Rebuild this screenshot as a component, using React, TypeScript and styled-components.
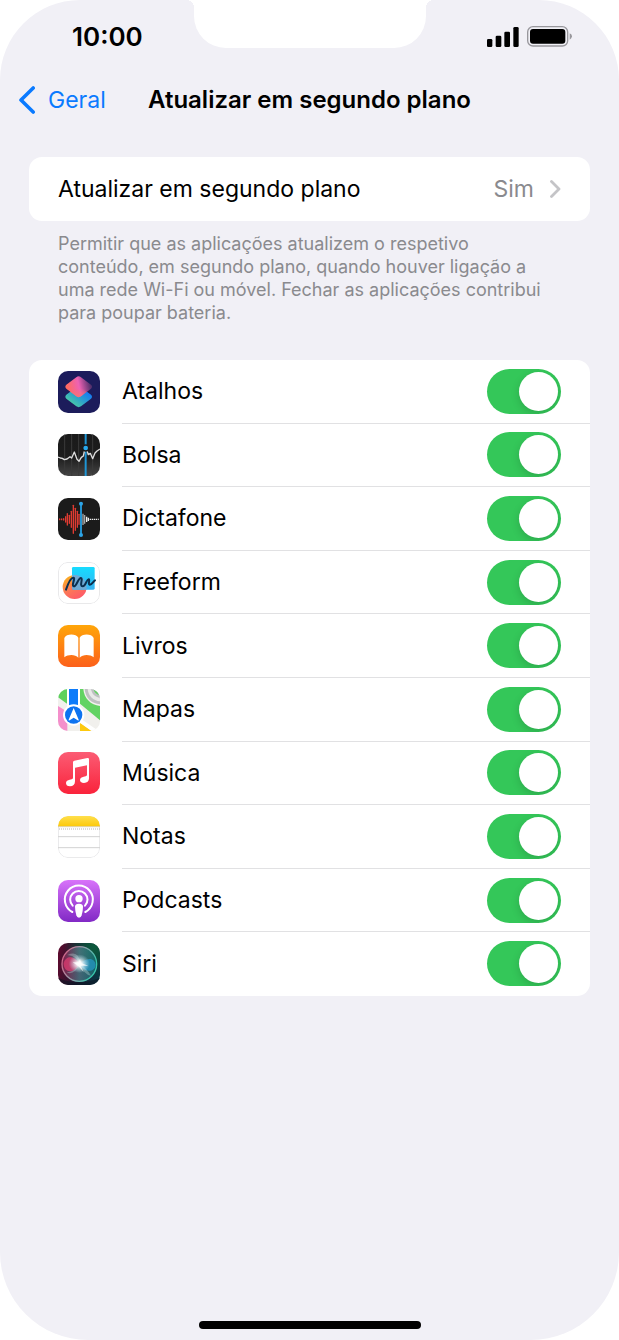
import React, { useState } from 'react';
import styled, { createGlobalStyle } from 'styled-components';

const GlobalStyle = createGlobalStyle`
  *, *::before, *::after { box-sizing: border-box; }
  body {
    margin: 0;
    background: #ffffff;
    color: #000000;
    font-family: Inter, "Liberation Sans", sans-serif;
    font-size: 23px;
  }
`;

const Screen = styled.div`
  display: flex;
  flex-direction: column;
  min-height: 100vh;
  background: #f1f0f6;
  border-radius: 80px 80px 88px 88px;
  overflow: hidden;
`;

const StatusBar = styled.header`
  display: grid;
  grid-template-columns: 1fr 232px 1fr;
  height: 72px;
`;

const Time = styled.time`
  padding-left: 72px;
  font-size: 26px;
  font-weight: 600;
  line-height: 74px;
`;

const Notch = styled.div`
  position: relative;
  height: 48px;
  background: #ffffff;
  border-radius: 0 0 32px 32px;

  &::before,
  &::after {
    content: '';
    position: absolute;
    top: 0;
    width: 8px;
    height: 8px;
  }
  &::before {
    right: 100%;
    background: radial-gradient(circle at 0 100%, transparent 8px, #ffffff 8px);
  }
  &::after {
    left: 100%;
    background: radial-gradient(circle at 100% 100%, transparent 8px, #ffffff 8px);
  }
`;

const Indicators = styled.div`
  display: flex;
  justify-content: flex-end;
  align-items: center;
  gap: 8px;
  height: 73px;
  padding-right: 47px;
`;

const NavBar = styled.nav`
  display: grid;
  grid-template-columns: 1fr auto 1fr;
  align-items: center;
  height: 55px;
`;

const BackLink = styled.a`
  display: flex;
  align-items: center;
  gap: 12px;
  padding-left: 18px;
  color: #0a7aff;
  text-decoration: none;
`;

const Title = styled.h1`
  margin: 0;
  font-size: 24px;
  font-weight: 600;
`;

const Content = styled.main`
  flex: 1;
  padding: 30px 29px;
`;

const Card = styled.div`
  background: #ffffff;
  border-radius: 13px;
  overflow: hidden;
`;

const SettingLink = styled.a`
  display: flex;
  align-items: center;
  gap: 16px;
  height: 64px;
  padding: 0 29px;
  color: inherit;
  text-decoration: none;
`;

const SettingName = styled.span`
  flex: 1;
`;

const SettingValue = styled.span`
  color: #8a8a8e;
`;

const Hint = styled.p`
  margin: 11px 0 36px;
  padding: 0 38px 0 29px;
  color: #8a8a8e;
  font-size: 18px;
  line-height: 23px;
`;

const AppList = styled(Card).attrs({ as: 'ul' })`
  display: grid;
  grid-auto-rows: 1fr;
  min-height: 636px;
  margin: 0;
  padding: 0;
  list-style: none;
`;

const AppRow = styled.li`
  display: flex;
  align-items: center;
  gap: 22px;
  padding-left: 29px;
`;

const RowBody = styled.div`
  display: flex;
  flex: 1;
  align-self: stretch;
  align-items: center;
  padding-right: 29px;
  border-bottom: 1px solid #e1e1e3;

  ${AppRow}:last-child & {
    border-bottom-color: transparent;
  }
`;

const AppName = styled.label`
  flex: 1;
`;

const Switch = styled.input`
  appearance: none;
  width: 74px;
  height: 45px;
  margin: 0;
  padding: 3px;
  border-radius: 23px;
  background: #e9e9ea;
  overflow: hidden;
  cursor: pointer;

  &::before {
    content: '';
    display: block;
    width: 39px;
    height: 39px;
    border-radius: 50%;
    background: #ffffff;
    box-shadow: 0 3px 8px rgba(0, 0, 0, 0.15);
  }
  &:checked {
    background: #34c759;
  }
  &:checked::before {
    margin-left: auto;
  }
`;

const HomeArea = styled.footer`
  display: flex;
  justify-content: center;
  padding-bottom: 11px;
`;

const HomeBar = styled.div`
  width: 222px;
  height: 8px;
  border-radius: 4px;
  background: #000000;
`;

const IconSvg = styled.svg`
  flex: none;
  display: block;
  width: 42px;
  height: 42px;
  border-radius: 10px;
`;

const AppIcon = ({ children }: { children: React.ReactNode }) => (
  <IconSvg viewBox="0 0 126 126" aria-hidden="true">{children}</IconSvg>
);

const ShortcutsIcon = () => (
  <AppIcon>
    <defs>
      <linearGradient id="sc-low" x1="0.2" y1="1" x2="0.9" y2="0.3">
        <stop offset="0" stopColor="#52d69a" />
        <stop offset="0.5" stopColor="#2fa5c8" />
        <stop offset="1" stopColor="#1478f5" />
      </linearGradient>
      <linearGradient id="sc-high" x1="0.1" y1="0.6" x2="0.95" y2="0.45">
        <stop offset="0" stopColor="#ff6a62" />
        <stop offset="0.5" stopColor="#ee62b4" />
        <stop offset="1" stopColor="#54306c" />
      </linearGradient>
      <linearGradient id="sc-tip" x1="0" y1="0" x2="0" y2="1">
        <stop offset="0.2" stopColor="#f76f7c" stopOpacity="0" />
        <stop offset="1" stopColor="#f77476" />
      </linearGradient>
    </defs>
    <rect width="126" height="126" fill="#1c1c5b" />
    <path d="M55 49Q62 43 69 49L99 71Q105 77 99 83L69 106Q62 111 55 106L25 83Q19 77 25 71Z" fill="url(#sc-low)" />
    <path d="M55 19Q62 13 69 19L99 41Q105 47 99 53L69 76Q62 81 55 76L25 53Q19 47 25 41Z" fill="url(#sc-high)" />
    <path d="M55 49Q62 43 69 49L86 62L69 76Q62 81 55 76L37 62Z" fill="url(#sc-tip)" />
  </AppIcon>
);

const StocksIcon = () => (
  <AppIcon>
    <defs>
      <linearGradient id="st-bg" x1="0" y1="0" x2="0" y2="1">
        <stop offset="0" stopColor="#1a1a1a" />
        <stop offset="0.55" stopColor="#1d1d1d" />
        <stop offset="1" stopColor="#454545" />
      </linearGradient>
    </defs>
    <rect width="126" height="126" fill="url(#st-bg)" />
    <path d="M20 0V126M41 0V126M62 0V126M104 0V126" stroke="#3b3b3b" strokeWidth="3" />
    <path d="M83 0V126" stroke="#1f95d4" strokeWidth="6" />
    <path d="M0 69L7 72L13 73L19 77L27 75L36 68L41 72L49 54L57 76L63 82L70 70L76 66L80 48L87 50L91 62L97 58L104 74L111 57L117 51L126 45" fill="none" stroke="#dddddd" strokeWidth="4" strokeLinejoin="round" />
    <circle cx="83" cy="42" r="11" fill="#1b1b1b" />
    <circle cx="83" cy="42" r="7" fill="#27a9ee" />
  </AppIcon>
);

const redBars = [[5, 2], [11, 2], [17, 4], [23, 16], [28, 34], [34, 24], [40, 48], [46, 84], [52, 66], [58, 48], [63, 30]];
const whiteBars = [[75, 34], [80, 26], [86, 16], [91, 10], [97, 4], [103, 4], [109, 4], [115, 4], [121, 3]];

const VoiceMemosIcon = () => (
  <AppIcon>
    <rect width="126" height="126" fill="#1b1b1b" />
    {redBars.map(([x, h]) => (
      <path key={x} d={`M${x} ${64 - h / 2}v${h}`} stroke="#e03b32" strokeWidth="4" strokeLinecap="round" />
    ))}
    {whiteBars.map(([x, h]) => (
      <path key={x} d={`M${x} ${64 - h / 2}v${h}`} stroke={x < 82 ? '#a5a5a5' : '#f0f0f0'} strokeWidth="4" />
    ))}
    <path d="M69 17V111" stroke="#2592cf" strokeWidth="6" />
    <circle cx="69" cy="17" r="6" fill="#2da5e8" />
    <circle cx="69" cy="111" r="6" fill="#2da5e8" />
  </AppIcon>
);

const FreeformIcon = () => (
  <AppIcon>
    <defs>
      <linearGradient id="ff-sq" x1="0" y1="0" x2="0" y2="1">
        <stop offset="0" stopColor="#16dcff" />
        <stop offset="1" stopColor="#36b2f2" />
      </linearGradient>
      <linearGradient id="ff-c" x1="0.1" y1="0.1" x2="0.6" y2="1">
        <stop offset="0" stopColor="#fbb021" />
        <stop offset="0.5" stopColor="#fb7b56" />
        <stop offset="1" stopColor="#ff5b68" />
      </linearGradient>
      <clipPath id="ff-clip"><circle cx="50" cy="75" r="36" /></clipPath>
    </defs>
    <rect x="1" y="1" width="124" height="124" rx="29" fill="#ffffff" stroke="#e5e5e7" strokeWidth="3" />
    <circle cx="50" cy="75" r="36" fill="url(#ff-c)" />
    <rect x="42" y="15" width="68" height="68" rx="4" fill="url(#ff-sq)" />
    <rect x="42" y="15" width="68" height="68" rx="4" fill="#6fa9d3" clipPath="url(#ff-clip)" />
    <path d="M24 83C29 68 37 47 46 47C54 47 39 71 47 73C56 75 60 47 69 48C76 49 63 73 74 73C83 73 86 51 92 52C97 53 89 67 95 68C102 69 106 58 111 55" fill="none" stroke="#0b2f4e" strokeWidth="6" strokeLinecap="round" />
  </AppIcon>
);

const BooksIcon = () => (
  <AppIcon>
    <defs>
      <linearGradient id="bk-bg" x1="0" y1="0" x2="0" y2="1">
        <stop offset="0" stopColor="#ffa609" />
        <stop offset="1" stopColor="#fc601b" />
      </linearGradient>
    </defs>
    <rect width="126" height="126" fill="url(#bk-bg)" />
    <path d="M19 39C24 26 54 25 61 38V98C52 88 30 88 19 97Z" fill="#ffffff" />
    <path d="M107 39C102 26 72 25 65 38V98C74 88 96 88 107 97Z" fill="#ffffff" />
  </AppIcon>
);

const MapsIcon = () => (
  <AppIcon>
    <rect width="126" height="126" fill="#f1f0ed" />
    <path d="M0 0H27V44L0 25Z" fill="#5dd15d" />
    <path d="M66 0H76C78 28 98 48 126 51V94L66 44Z" fill="#62d363" />
    <path d="M80 0H126V46C100 44 82 26 80 0Z" fill="#bfc1c2" />
    <path d="M89 0H126V37C105 35 91 20 89 0Z" fill="#e9e9e8" />
    <path d="M99 0H126V26C111 25 101 14 99 0Z" fill="#bfc1c2" />
    <path d="M107 0H126V18C115 17 108 10 107 0Z" fill="#66d266" />
    <path d="M0 51L28 68V126H0Z" fill="#f48fcb" />
    <path d="M66 101L101 126H66Z" fill="#fdc90e" />
    <path d="M66 88L122 126H101L66 101Z" fill="#ffffff" />
    <rect x="27" width="39" height="60" fill="#ffffff" />
    <rect x="33" width="27" height="60" fill="#0d7bfa" />
    <circle cx="47" cy="78" r="32" fill="#ffffff" />
    <circle cx="47" cy="78" r="26" fill="#0d73f0" />
    <path d="M47 57L62 92Q63 96 59 94L47 86L35 94Q31 96 32 92Z" fill="#ffffff" />
  </AppIcon>
);

const MusicIcon = () => (
  <AppIcon>
    <defs>
      <linearGradient id="mu-bg" x1="0" y1="0" x2="0" y2="1">
        <stop offset="0" stopColor="#fb5c74" />
        <stop offset="1" stopColor="#fa233b" />
      </linearGradient>
    </defs>
    <rect width="126" height="126" fill="url(#mu-bg)" />
    <path d="M45 31Q45 27 49 26L88 18Q93 17 93 22V79C93 88 87 93 78 93C70 93 66 89 66 84C66 78 71 75 77 74L83 73Q87 72 87 68V40L51 47V88C51 98 45 103 36 103C28 103 24 99 24 93C24 87 29 84 35 83L41 82Q45 81 45 77Z" fill="#ffffff" />
  </AppIcon>
);

const NotesIcon = () => (
  <AppIcon>
    <defs>
      <linearGradient id="no-top" x1="0" y1="0" x2="0" y2="1">
        <stop offset="0" stopColor="#ffdf4c" />
        <stop offset="1" stopColor="#fcc90b" />
      </linearGradient>
    </defs>
    <rect x="1" y="1" width="124" height="124" rx="29" fill="#ffffff" stroke="#e6e6e8" strokeWidth="3" />
    <path d="M0 31V29A29 29 0 0 1 29 0H97A29 29 0 0 1 126 29V31Z" fill="url(#no-top)" />
    <path d="M0 32H126" stroke="#cdbb83" strokeWidth="2" />
    <path d="M3 39H126" stroke="#b6b6b6" strokeWidth="3" strokeDasharray="3 3" />
    <path d="M0 62H126M0 95H126" stroke="#d2d2d2" strokeWidth="3" />
  </AppIcon>
);

const PodcastsIcon = () => (
  <AppIcon>
    <defs>
      <linearGradient id="po-bg" x1="0" y1="0" x2="0" y2="1">
        <stop offset="0" stopColor="#d873fa" />
        <stop offset="1" stopColor="#8129c5" />
      </linearGradient>
    </defs>
    <rect width="126" height="126" fill="url(#po-bg)" />
    <g fill="none" stroke="#ffffff" strokeWidth="6" strokeLinecap="round">
      <path d="M43 96A42 42 0 1 1 82 96" />
      <path d="M44 77A26 26 0 1 1 81 77" />
    </g>
    <circle cx="63" cy="56" r="11" fill="#ffffff" />
    <path d="M51 80Q51 71 63 71Q75 71 75 80Q75 91 71 106Q69 113 63 113Q57 113 55 106Q51 91 51 80Z" fill="#ffffff" />
  </AppIcon>
);

const SiriIcon = () => (
  <AppIcon>
    <defs>
      <linearGradient id="si-bg" x1="0" y1="0.45" x2="1" y2="0.55">
        <stop offset="0" stopColor="#5b0b2e" />
        <stop offset="0.45" stopColor="#1c1930" />
        <stop offset="1" stopColor="#093744" />
      </linearGradient>
      <radialGradient id="si-green" cx="0.85" cy="0.1" r="0.7">
        <stop offset="0" stopColor="#0c5a3c" />
        <stop offset="1" stopColor="#0c5a3c" stopOpacity="0" />
      </radialGradient>
      <linearGradient id="si-ring" x1="0" y1="0" x2="1" y2="0.4">
        <stop offset="0" stopColor="#e0567e" />
        <stop offset="0.5" stopColor="#9a9aaa" />
        <stop offset="1" stopColor="#38c4aa" />
      </linearGradient>
      <radialGradient id="si-glow">
        <stop offset="0" stopColor="#ffffff" />
        <stop offset="0.25" stopColor="#ffffff" stopOpacity="0.9" />
        <stop offset="1" stopColor="#b9e5f5" stopOpacity="0" />
      </radialGradient>
      <linearGradient id="si-orb" x1="0" y1="0.5" x2="1" y2="0.5">
        <stop offset="0" stopColor="#9d2456" />
        <stop offset="0.5" stopColor="#5c8c98" />
        <stop offset="1" stopColor="#12787c" />
      </linearGradient>
    </defs>
    <rect width="126" height="126" fill="url(#si-bg)" />
    <rect width="126" height="126" fill="url(#si-green)" />
    <path d="M0 104Q60 132 126 104V126H0Z" fill="#0b1523" opacity="0.6" />
    <circle cx="64" cy="63" r="52" fill="url(#si-orb)" fillOpacity="0.65" stroke="url(#si-ring)" strokeWidth="4" />
    <path d="M64 63C52 39 24 34 17 61C17 90 47 95 64 63Z" fill="#df3c70" opacity="0.75" />
    <path d="M64 65C78 45 109 40 113 65C111 89 79 89 64 65Z" fill="#2597c4" opacity="0.75" />
    <path d="M28 36Q64 20 66 63Q88 78 99 98Q78 96 66 63Q47 99 26 88Q50 87 66 63Q54 37 28 36Z" fill="#d5f1f2" opacity="0.3" />
    <ellipse cx="64" cy="62" rx="32" ry="28" fill="url(#si-glow)" />
    <path d="M44 58L62 58L66 47L69 60L91 68L68 68L77 87L61 69Z" fill="#ffffff" opacity="0.75" />
  </AppIcon>
);

const apps = [
  { name: 'Atalhos', Icon: ShortcutsIcon },
  { name: 'Bolsa', Icon: StocksIcon },
  { name: 'Dictafone', Icon: VoiceMemosIcon },
  { name: 'Freeform', Icon: FreeformIcon },
  { name: 'Livros', Icon: BooksIcon },
  { name: 'Mapas', Icon: MapsIcon },
  { name: 'Música', Icon: MusicIcon },
  { name: 'Notas', Icon: NotesIcon },
  { name: 'Podcasts', Icon: PodcastsIcon },
  { name: 'Siri', Icon: SiriIcon },
];

const SignalIcon = () => (
  <svg width="32" height="20" viewBox="0 0 96 60" aria-hidden="true">
    <rect x="0" y="36" width="16" height="24" rx="4" />
    <rect x="26" y="26" width="17" height="34" rx="4" />
    <rect x="52" y="14" width="17" height="46" rx="4" />
    <rect x="79" y="0" width="16" height="60" rx="4" />
  </svg>
);

const BatteryIcon = () => (
  <svg width="45" height="21" viewBox="0 0 135 63" aria-hidden="true">
    <rect x="2" y="2" width="120" height="58" rx="16" fill="none" stroke="#98979c" strokeWidth="4" />
    <rect x="9" y="9" width="106" height="44" rx="9" />
    <path d="M128 22Q135 25 135 31Q135 37 128 41Z" fill="#98979c" />
  </svg>
);

const BackIcon = () => (
  <svg width="18" height="28" viewBox="0 0 18 28" fill="none" stroke="currentColor" strokeWidth="3.6" strokeLinecap="round" strokeLinejoin="round" aria-hidden="true">
    <path d="M15.2 2L3 14L15.2 26" />
  </svg>
);

const ForwardIcon = () => (
  <svg width="11" height="18" viewBox="0 0 11 18" fill="none" stroke="#c4c4c7" strokeWidth="2.8" strokeLinecap="round" strokeLinejoin="round" aria-hidden="true">
    <path d="M1.5 1.5L9 9L1.5 16.5" />
  </svg>
);

const AppSetting = ({ name, Icon }: { name: string; Icon: React.FC }) => {
  const [enabled, setEnabled] = useState(true);
  const id = `refresh-${name}`;
  return (
    <AppRow>
      <Icon />
      <RowBody>
        <AppName htmlFor={id}>{name}</AppName>
        <Switch
          id={id}
          type="checkbox"
          role="switch"
          checked={enabled}
          onChange={(e) => setEnabled(e.target.checked)}
        />
      </RowBody>
    </AppRow>
  );
};

export default function App() {
  return (
    <>
      <GlobalStyle />
      <Screen>
        <StatusBar>
          <Time>10:00</Time>
          <Notch />
          <Indicators>
            <SignalIcon />
            <BatteryIcon />
          </Indicators>
        </StatusBar>
        <NavBar>
          <BackLink href="#geral">
            <BackIcon />
            Geral
          </BackLink>
          <Title>Atualizar em segundo plano</Title>
        </NavBar>
        <Content>
          <Card>
            <SettingLink href="#modo">
              <SettingName>Atualizar em segundo plano</SettingName>
              <SettingValue>Sim</SettingValue>
              <ForwardIcon />
            </SettingLink>
          </Card>
          <Hint>
            Permitir que as aplicações atualizem o respetivo conteúdo, em segundo plano, quando
            houver ligação a uma rede Wi-Fi ou móvel. Fechar as aplicações contribui para poupar
            bateria.
          </Hint>
          <AppList>
            {apps.map((app) => (
              <AppSetting key={app.name} {...app} />
            ))}
          </AppList>
        </Content>
        <HomeArea>
          <HomeBar />
        </HomeArea>
      </Screen>
    </>
  );
}
